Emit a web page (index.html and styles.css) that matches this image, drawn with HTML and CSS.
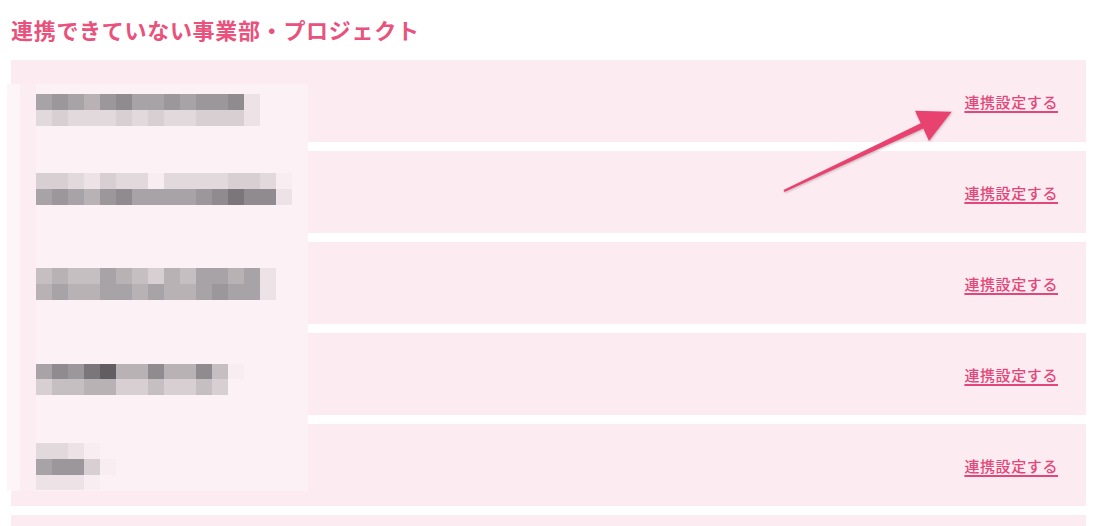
FILE: index.html
```html
<!DOCTYPE html>
<html lang="ja">
<head>
    <meta charset="UTF-8">
    <meta name="viewport" content="width=device-width, initial-scale=1.0">
    <title>連携できていない事業部・プロジェクト</title>
    <link rel="stylesheet" href="styles.css">
</head>
<body>
    <div class="page">
        <h1 class="title">連携できていない事業部・プロジェクト</h1>

        <ul class="list">
            <li class="item"><a class="link" href="#">連携設定する</a></li>
            <li class="item"><a class="link" href="#">連携設定する</a></li>
            <li class="item"><a class="link" href="#">連携設定する</a></li>
            <li class="item"><a class="link" href="#">連携設定する</a></li>
            <li class="item"><a class="link" href="#">連携設定する</a></li>
            <li class="item"></li>
        </ul>

        <!-- 名前はモザイクで隠す -->
        <div class="mosaic">
            <div class="strip strip-first"></div>
            <div class="strip"><i class="k6"></i><i class="k7"></i><i class="k6"></i><i class="k5"></i><i class="k7"></i><i class="k8"></i><i class="k6"></i><i class="k6"></i><i class="k7"></i><i class="k6"></i><i class="k7"></i><i class="k7"></i><i class="k8"></i><i class="k1"></i></div>
            <div class="strip"><i class="k2"></i><i class="k3"></i><i class="k2"></i><i class="k2"></i><i class="k2"></i><i class="k3"></i><i class="k2"></i><i class="k3"></i><i class="k2"></i><i class="k2"></i><i class="k3"></i><i class="k3"></i><i class="k3"></i><i class="k1"></i></div>
            <div class="strip"></div>
            <div class="strip"></div>
            <div class="strip"></div>
            <div class="strip"><i class="k3"></i><i class="k3"></i><i class="k2"></i><i class="k1"></i><i class="k3"></i><i class="k2"></i><i class="k2"></i><i class="k0"></i><i class="k2"></i><i class="k2"></i><i class="k2"></i><i class="k2"></i><i class="k3"></i><i class="k3"></i><i class="k2"></i><i class="k0"></i></div>
            <div class="strip"><i class="k6"></i><i class="k7"></i><i class="k6"></i><i class="k5"></i><i class="k7"></i><i class="k8"></i><i class="k6"></i><i class="k6"></i><i class="k6"></i><i class="k6"></i><i class="k7"></i><i class="k8"></i><i class="k9"></i><i class="k8"></i><i class="k8"></i><i class="k1"></i></div>
            <div class="strip"></div>
            <div class="strip"></div>
            <div class="strip"></div>
            <div class="strip"></div>
            <div class="strip"><i class="k4"></i><i class="k5"></i><i class="k4"></i><i class="k4"></i><i class="k6"></i><i class="k5"></i><i class="k4"></i><i class="k3"></i><i class="k5"></i><i class="k4"></i><i class="k6"></i><i class="k6"></i><i class="k5"></i><i class="k6"></i><i class="k1"></i></div>
            <div class="strip"><i class="k5"></i><i class="k6"></i><i class="k5"></i><i class="k5"></i><i class="k6"></i><i class="k6"></i><i class="k5"></i><i class="k6"></i><i class="k5"></i><i class="k5"></i><i class="k6"></i><i class="k7"></i><i class="k6"></i><i class="k6"></i><i class="k1"></i></div>
            <div class="strip"></div>
            <div class="strip"></div>
            <div class="strip"></div>
            <div class="strip"></div>
            <div class="strip"><i class="k6"></i><i class="k8"></i><i class="k7"></i><i class="k9"></i><i class="k10"></i><i class="k5"></i><i class="k5"></i><i class="k8"></i><i class="k5"></i><i class="k5"></i><i class="k8"></i><i class="k4"></i><i class="k0"></i></div>
            <div class="strip"><i class="k3"></i><i class="k4"></i><i class="k4"></i><i class="k5"></i><i class="k5"></i><i class="k3"></i><i class="k3"></i><i class="k4"></i><i class="k3"></i><i class="k3"></i><i class="k4"></i><i class="k3"></i></div>
            <div class="strip"></div>
            <div class="strip"></div>
            <div class="strip"></div>
            <div class="strip"><i class="k2"></i><i class="k2"></i><i class="k1"></i><i class="k0"></i></div>
            <div class="strip"><i class="k6"></i><i class="k7"></i><i class="k7"></i><i class="k3"></i><i class="k0"></i></div>
            <div class="strip"><i class="k1"></i><i class="k1"></i><i class="k1"></i><i class="k0"></i></div>
        </div>

        <!-- 注目矢印 -->
        <svg class="arrow" width="1096" height="526" viewBox="0 0 1096 526">
            <defs>
                <filter id="shadow" x="-10%" y="-10%" width="120%" height="130%">
                    <feDropShadow dx="0.5" dy="1" stdDeviation="1" flood-color="#000" flood-opacity="0.25"/>
                </filter>
            </defs>
            <polygon filter="url(#shadow)" fill="#e8436f"
                points="783.5,189.9 920.7,123.2 915,110.7 951.7,111.7 929,141 923.3,128.6 784.5,192.1"/>
        </svg>
    </div>
</body>
</html>
```

FILE: styles.css
```css
body {
    font-family: "Noto Sans CJK JP", "Noto Sans", sans-serif;
    margin: 0;
    padding: 0;
    background-color: #fff;
    overflow: hidden;
}
.page {
    position: relative;
    padding: 14px 10px 0 11px;
}
.title {
    margin: 0 0 16px;
    font-size: 22px;
    line-height: 30px;
    font-weight: bold;
    letter-spacing: 0.7px;
    color: #e8527c;
}
.list {
    list-style: none;
    margin: 0;
    padding: 0;
    display: flex;
    flex-direction: column;
    gap: 9px;
}
.item {
    height: 82px;
    display: flex;
    align-items: center;
    justify-content: flex-end;
    padding-right: 28px;
    background-color: #fcebf0;
}
.link {
    font-size: 15px;
    font-weight: 500;
    letter-spacing: 0.6px;
    color: #e3477a;
    text-decoration: underline;
    text-decoration-thickness: 1.5px;
    text-underline-offset: 3px;
    padding-top: 1px;
}

/* モザイク */
.mosaic {
    position: absolute;
    top: 84px;
    left: 7px;
    width: 301px;
    height: 407px;
    background: linear-gradient(to right, #fdf5f7 0, #fdf5f7 13px, #fbedf1 13px, #fbedf1 29px, #fcf2f5 29px);
}
.strip {
    height: 15.87px;
    display: flex;
    padding-left: 29px;
}
.strip-first {
    height: 10px;
}
.strip i {
    width: 16px;
    height: 100%;
}
.k0 { background-color: #f8edf1; }
.k1 { background-color: #ede3e7; }
.k2 { background-color: #e2d9dd; }
.k3 { background-color: #d7cfd2; }
.k4 { background-color: #c6bfc2; }
.k5 { background-color: #b8b2b5; }
.k6 { background-color: #a8a3a6; }
.k7 { background-color: #9c979a; }
.k8 { background-color: #908b8e; }
.k9 { background-color: #7b7679; }
.k10 { background-color: #625d60; }

.arrow {
    position: absolute;
    top: 0;
    left: 0;
    pointer-events: none;
}
```
